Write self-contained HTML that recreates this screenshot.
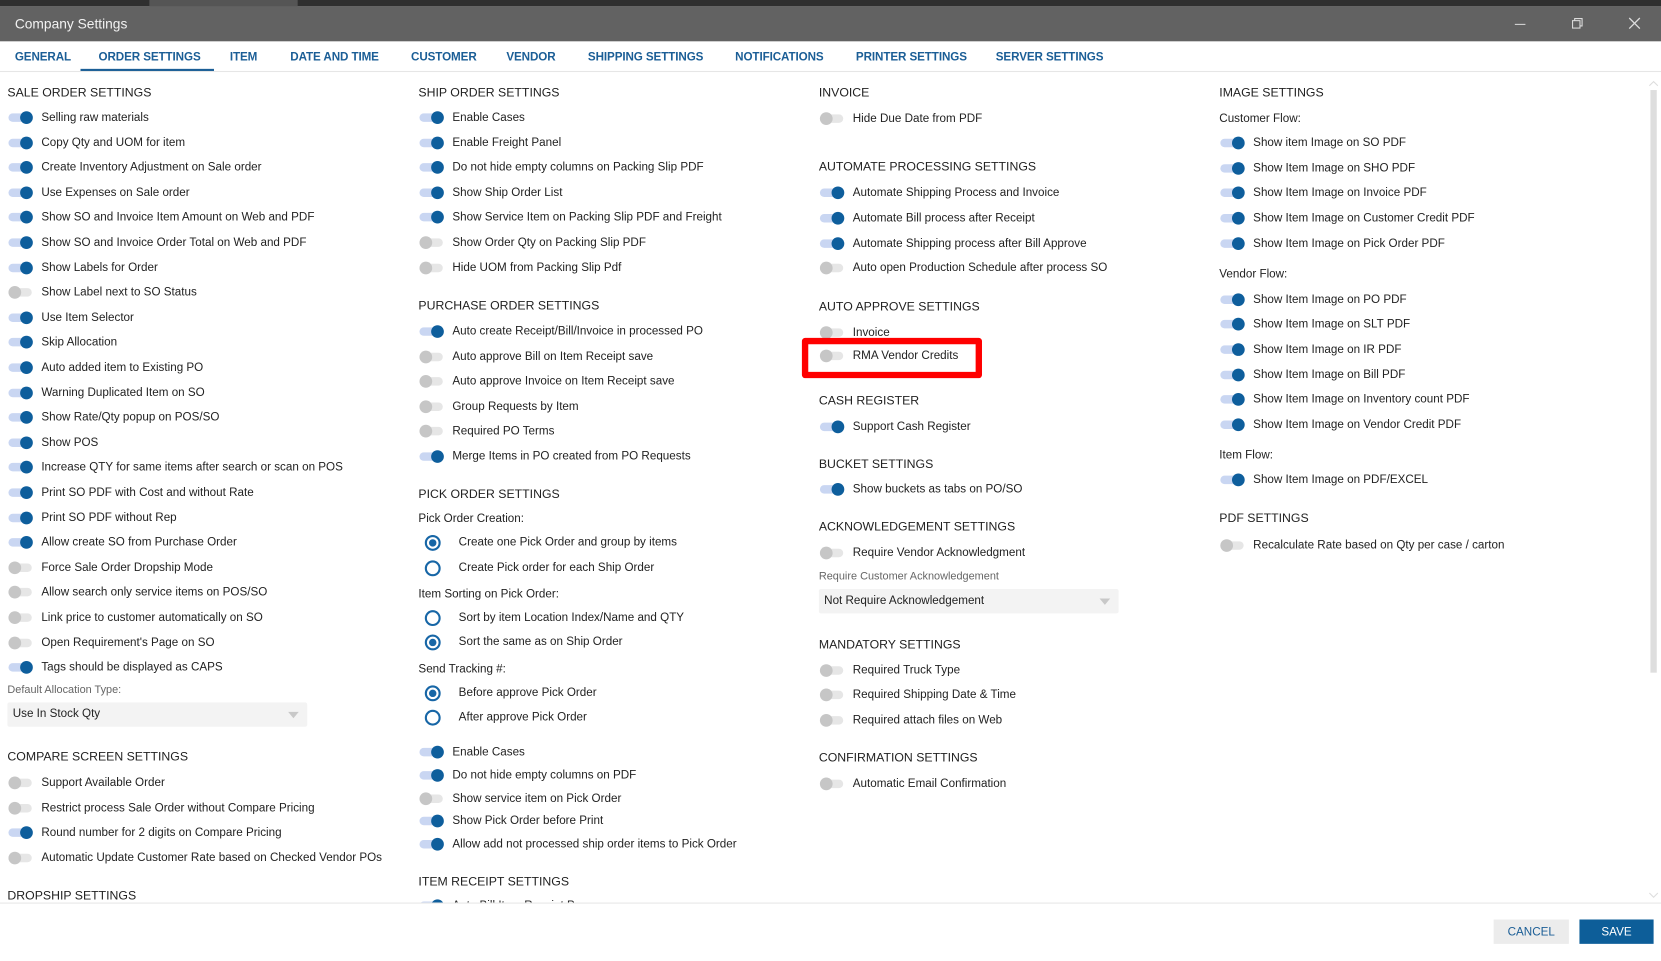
<!DOCTYPE html>
<html><head><meta charset="utf-8"><style>
html,body{margin:0;padding:0;width:1661px;height:960px;overflow:hidden;background:#fff;}
#w{position:absolute;left:0;top:0;width:1568px;height:907px;transform:scale(1.05932);transform-origin:0 0;font-family:"Liberation Sans",sans-serif;color:#222;}
.top{position:absolute;left:0;top:0;width:1568px;height:6px;background:#2f2f2f}
.top i{position:absolute;left:141px;width:140px;top:0;height:6px;background:#555}
.title{position:absolute;left:0;top:6px;width:1568px;height:33px;background:#626262;color:#f2f2f2;font-size:13px;line-height:34px}
.title span{position:absolute;left:14px}
.tabs{position:absolute;left:0;top:39px;width:1568px;height:28px;border-bottom:1px solid #e6e6e6}
.tab{position:absolute;top:9px;font-size:11px;font-weight:bold;color:#1b5e96;white-space:nowrap;letter-spacing:-0.1px}
.ul{position:absolute;left:76px;width:126px;top:65px;height:2px;background:#1b5e96}
.clip{position:absolute;left:0;top:68px;width:1568px;height:784px;overflow:hidden}
.in{position:absolute;left:0;top:1px;width:1568px;height:800px}
.h{position:absolute;font-size:11.6px;white-space:nowrap;line-height:16px;color:#222}
.r{position:absolute;font-size:11px;white-space:nowrap;line-height:16px;padding-left:32px;height:16px}
.r::before{content:"";position:absolute;left:1px;top:4px;width:22px;height:8px;border-radius:4px;background:#e6e6e6}
.r::after{content:"";position:absolute;left:1px;top:2px;width:12px;height:12px;border-radius:6px;background:#c6c6c6}
.r.on::before{background:#c9d6f2}
.r.on::after{left:12px;background:#0e5e9c}
.l{position:absolute;font-size:11px;white-space:nowrap;line-height:16px}
.g{position:absolute;font-size:10.3px;white-space:nowrap;line-height:16px;color:#666}
.rd{position:absolute;font-size:11px;white-space:nowrap;line-height:16px;padding-left:38px;height:16px}
.rd::before{content:"";position:absolute;left:6px;top:1px;width:11px;height:11px;border:2px solid #1766a6;border-radius:50%}
.rd.on::after{content:"";position:absolute;left:10px;top:5px;width:7px;height:7px;border-radius:50%;background:#1766a6}
.sel{position:absolute;height:23px;background:#f3f3f3;border-radius:2px;font-size:11px;line-height:23px;padding-left:5px;box-sizing:border-box}
.sel i{position:absolute;right:8px;top:9px;width:0;height:0;border-left:5px solid transparent;border-right:5px solid transparent;border-top:6px solid #c8c8c8}
.red{position:absolute;left:757px;top:250px;width:158px;height:26px;border:6px solid #f00;border-radius:3px}
.sb{position:absolute;left:1558px;top:85px;width:6px;height:550px;background:#dedede}
.bot{position:absolute;left:0;top:852px;width:1568px;height:1px;background:#e6e6e6}
.btn{position:absolute;top:868px;height:23px;line-height:24px;text-align:center;font-size:11px}
</style></head><body><div id="w">
<div class="top"><i></i></div>
<div class="title"><span>Company Settings</span>
<svg style="position:absolute;left:1429px;top:11px" width="12" height="12"><path d="M1 6h10" stroke="#ddd" stroke-width="1"/></svg>
<svg style="position:absolute;left:1483px;top:10px" width="12" height="12"><rect x="1.5" y="3.5" width="7" height="7" fill="none" stroke="#ddd"/><path d="M3.5 3.5V1.5h7v7h-2" fill="none" stroke="#ddd"/></svg>
<svg style="position:absolute;left:1537px;top:10px" width="12" height="12"><path d="M1 1l10 10M11 1L1 11" stroke="#ddd" stroke-width="1.2"/></svg>
</div>
<div class="tabs">
<span class="tab" style="left:14px">GENERAL</span>
<span class="tab" style="left:93px">ORDER SETTINGS</span>
<span class="tab" style="left:217px">ITEM</span>
<span class="tab" style="left:274px">DATE AND TIME</span>
<span class="tab" style="left:388px">CUSTOMER</span>
<span class="tab" style="left:478px">VENDOR</span>
<span class="tab" style="left:555px">SHIPPING SETTINGS</span>
<span class="tab" style="left:694px">NOTIFICATIONS</span>
<span class="tab" style="left:808px">PRINTER SETTINGS</span>
<span class="tab" style="left:940px">SERVER SETTINGS</span>
</div>
<div class="ul"></div>
<div class="clip"><div class="in">
<div class="h" style="left:7px;top:11px">SALE ORDER SETTINGS</div>
<div class="r on" style="left:7px;top:34px">Selling raw materials</div>
<div class="r on" style="left:7px;top:57.6px">Copy Qty and UOM for item</div>
<div class="r on" style="left:7px;top:81.2px">Create Inventory Adjustment on Sale order</div>
<div class="r on" style="left:7px;top:104.8px">Use Expenses on Sale order</div>
<div class="r on" style="left:7px;top:128.4px">Show SO and Invoice Item Amount on Web and PDF</div>
<div class="r on" style="left:7px;top:152px">Show SO and Invoice Order Total on Web and PDF</div>
<div class="r on" style="left:7px;top:175.6px">Show Labels for Order</div>
<div class="r" style="left:7px;top:199.2px">Show Label next to SO Status</div>
<div class="r on" style="left:7px;top:222.8px">Use Item Selector</div>
<div class="r on" style="left:7px;top:246.4px">Skip Allocation</div>
<div class="r on" style="left:7px;top:270px">Auto added item to Existing PO</div>
<div class="r on" style="left:7px;top:293.6px">Warning Duplicated Item on SO</div>
<div class="r on" style="left:7px;top:317.2px">Show Rate/Qty popup on POS/SO</div>
<div class="r on" style="left:7px;top:340.8px">Show POS</div>
<div class="r on" style="left:7px;top:364.4px">Increase QTY for same items after search or scan on POS</div>
<div class="r on" style="left:7px;top:388px">Print SO PDF with Cost and without Rate</div>
<div class="r on" style="left:7px;top:411.6px">Print SO PDF without Rep</div>
<div class="r on" style="left:7px;top:435.2px">Allow create SO from Purchase Order</div>
<div class="r" style="left:7px;top:458.8px">Force Sale Order Dropship Mode</div>
<div class="r" style="left:7px;top:482.4px">Allow search only service items on POS/SO</div>
<div class="r" style="left:7px;top:506px">Link price to customer automatically on SO</div>
<div class="r" style="left:7px;top:529.6px">Open Requirement's Page on SO</div>
<div class="r on" style="left:7px;top:553.2px">Tags should be displayed as CAPS</div>
<div class="g" style="left:7px;top:575px">Default Allocation Type:</div>
<div class="sel" style="left:7px;top:594px;width:283px">Use In Stock Qty<i></i></div>
<div class="h" style="left:7px;top:638px">COMPARE SCREEN SETTINGS</div>
<div class="r" style="left:7px;top:662px">Support Available Order</div>
<div class="r" style="left:7px;top:686px">Restrict process Sale Order without Compare Pricing</div>
<div class="r on" style="left:7px;top:709px">Round number for 2 digits on Compare Pricing</div>
<div class="r" style="left:7px;top:733px">Automatic Update Customer Rate based on Checked Vendor POs</div>
<div class="h" style="left:7px;top:769px">DROPSHIP SETTINGS</div>
<div class="h" style="left:395px;top:11px">SHIP ORDER SETTINGS</div>
<div class="r on" style="left:395px;top:34px">Enable Cases</div>
<div class="r on" style="left:395px;top:57.6px">Enable Freight Panel</div>
<div class="r on" style="left:395px;top:81.2px">Do not hide empty columns on Packing Slip PDF</div>
<div class="r on" style="left:395px;top:104.8px">Show Ship Order List</div>
<div class="r on" style="left:395px;top:128.4px">Show Service Item on Packing Slip PDF and Freight</div>
<div class="r" style="left:395px;top:152px">Show Order Qty on Packing Slip PDF</div>
<div class="r" style="left:395px;top:175.6px">Hide UOM from Packing Slip Pdf</div>
<div class="h" style="left:395px;top:212px">PURCHASE ORDER SETTINGS</div>
<div class="r on" style="left:395px;top:236px">Auto create Receipt/Bill/Invoice in processed PO</div>
<div class="r" style="left:395px;top:259.6px">Auto approve Bill on Item Receipt save</div>
<div class="r" style="left:395px;top:283.2px">Auto approve Invoice on Item Receipt save</div>
<div class="r" style="left:395px;top:306.8px">Group Requests by Item</div>
<div class="r" style="left:395px;top:330.4px">Required PO Terms</div>
<div class="r on" style="left:395px;top:354px">Merge Items in PO created from PO Requests</div>
<div class="h" style="left:395px;top:390px">PICK ORDER SETTINGS</div>
<div class="l" style="left:395px;top:413px">Pick Order Creation:</div>
<div class="rd on" style="left:395px;top:435px">Create one Pick Order and group by items</div>
<div class="rd" style="left:395px;top:459px">Create Pick order for each Ship Order</div>
<div class="l" style="left:395px;top:484px">Item Sorting on Pick Order:</div>
<div class="rd" style="left:395px;top:506px">Sort by item Location Index/Name and QTY</div>
<div class="rd on" style="left:395px;top:529px">Sort the same as on Ship Order</div>
<div class="l" style="left:395px;top:555px">Send Tracking #:</div>
<div class="rd on" style="left:395px;top:577px">Before approve Pick Order</div>
<div class="rd" style="left:395px;top:600px">After approve Pick Order</div>
<div class="r on" style="left:395px;top:633px">Enable Cases</div>
<div class="r on" style="left:395px;top:655px">Do not hide empty columns on PDF</div>
<div class="r" style="left:395px;top:677px">Show service item on Pick Order</div>
<div class="r on" style="left:395px;top:698px">Show Pick Order before Print</div>
<div class="r on" style="left:395px;top:720px">Allow add not processed ship order items to Pick Order</div>
<div class="h" style="left:395px;top:756px">ITEM RECEIPT SETTINGS</div>
<div class="r on" style="left:395px;top:778px">Auto Bill Item Receipt Process</div>
<div class="h" style="left:773px;top:11px">INVOICE</div>
<div class="r" style="left:773px;top:35px">Hide Due Date from PDF</div>
<div class="h" style="left:773px;top:81px">AUTOMATE PROCESSING SETTINGS</div>
<div class="r on" style="left:773px;top:105px">Automate Shipping Process and Invoice</div>
<div class="r on" style="left:773px;top:129px">Automate Bill process after Receipt</div>
<div class="r on" style="left:773px;top:153px">Automate Shipping process after Bill Approve</div>
<div class="r" style="left:773px;top:176px">Auto open Production Schedule after process SO</div>
<div class="h" style="left:773px;top:213px">AUTO APPROVE SETTINGS</div>
<div class="r" style="left:773px;top:237px">Invoice</div>
<div class="red"></div>
<div class="r" style="left:773px;top:259px">RMA Vendor Credits</div>
<div class="h" style="left:773px;top:302px">CASH REGISTER</div>
<div class="r on" style="left:773px;top:326px">Support Cash Register</div>
<div class="h" style="left:773px;top:362px">BUCKET SETTINGS</div>
<div class="r on" style="left:773px;top:385px">Show buckets as tabs on PO/SO</div>
<div class="h" style="left:773px;top:421px">ACKNOWLEDGEMENT SETTINGS</div>
<div class="r" style="left:773px;top:445px">Require Vendor Acknowledgment</div>
<div class="g" style="left:773px;top:468px">Require Customer Acknowledgement</div>
<div class="sel" style="left:773px;top:487px;width:283px">Not Require Acknowledgement<i></i></div>
<div class="h" style="left:773px;top:532px">MANDATORY SETTINGS</div>
<div class="r" style="left:773px;top:556px">Required Truck Type</div>
<div class="r" style="left:773px;top:579px">Required Shipping Date &amp; Time</div>
<div class="r" style="left:773px;top:603px">Required attach files on Web</div>
<div class="h" style="left:773px;top:639px">CONFIRMATION SETTINGS</div>
<div class="r" style="left:773px;top:663px">Automatic Email Confirmation</div>
<div class="h" style="left:1151px;top:11px">IMAGE SETTINGS</div>
<div class="l" style="left:1151px;top:35px">Customer Flow:</div>
<div class="r on" style="left:1151px;top:58px">Show item Image on SO PDF</div>
<div class="r on" style="left:1151px;top:82px">Show Item Image on SHO PDF</div>
<div class="r on" style="left:1151px;top:105px">Show Item Image on Invoice PDF</div>
<div class="r on" style="left:1151px;top:129px">Show Item Image on Customer Credit PDF</div>
<div class="r on" style="left:1151px;top:153px">Show Item Image on Pick Order PDF</div>
<div class="l" style="left:1151px;top:182px">Vendor Flow:</div>
<div class="r on" style="left:1151px;top:206px">Show Item Image on PO PDF</div>
<div class="r on" style="left:1151px;top:229px">Show Item Image on SLT PDF</div>
<div class="r on" style="left:1151px;top:253px">Show Item Image on IR PDF</div>
<div class="r on" style="left:1151px;top:277px">Show Item Image on Bill PDF</div>
<div class="r on" style="left:1151px;top:300px">Show Item Image on Inventory count PDF</div>
<div class="r on" style="left:1151px;top:324px">Show Item Image on Vendor Credit PDF</div>
<div class="l" style="left:1151px;top:353px">Item Flow:</div>
<div class="r on" style="left:1151px;top:376px">Show Item Image on PDF/EXCEL</div>
<div class="h" style="left:1151px;top:413px">PDF SETTINGS</div>
<div class="r" style="left:1151px;top:438px">Recalculate Rate based on Qty per case / carton</div>
</div></div>
<div class="sb"></div>
<svg style="position:absolute;left:1556px;top:76px" width="10" height="6"><path d="M1 5l4-4 4 4" fill="none" stroke="#ddd"/></svg>
<svg style="position:absolute;left:1556px;top:842px" width="10" height="6"><path d="M1 1l4 4 4-4" fill="none" stroke="#ddd"/></svg>
<div class="bot"></div>
<div class="btn" style="left:1410px;width:71px;background:#ececec;color:#1b5e96">CANCEL</div>
<div class="btn" style="left:1491px;width:70px;background:#0d5e99;color:#fff">SAVE</div>
</div></body></html>
